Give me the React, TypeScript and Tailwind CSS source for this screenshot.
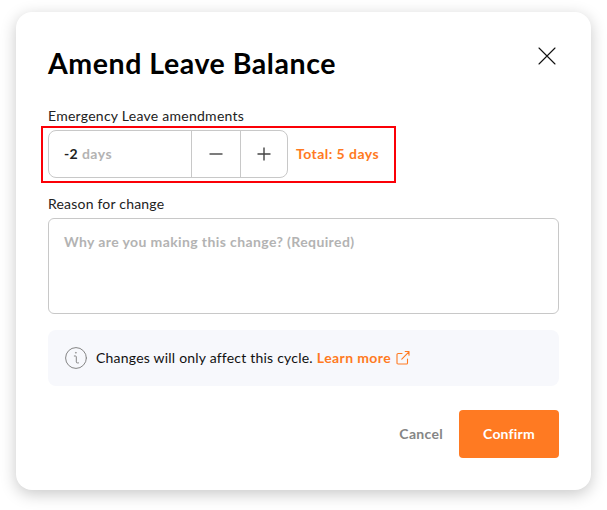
import type { ReactNode } from "react";

function CloseIcon() {
  return (
    <svg className="h-6 w-6" viewBox="0 0 24 24" fill="none" stroke="#111" strokeWidth="1.1" strokeLinecap="round">
      <path d="M4 4l16 16M20 4L4 20" />
    </svg>
  );
}

function InfoIcon() {
  return (
    <svg className="h-6 w-6" viewBox="0 0 24 24" fill="none" stroke="#858585" strokeWidth="1" strokeLinecap="round" strokeLinejoin="round">
      <circle cx="12" cy="12" r="10.4" />
      <path d="M10.3 10h1.2a.8.8 0 0 1 .8.8v5.1a1 1 0 0 0 1 1h1.2" />
      <circle cx="11.8" cy="6.8" r=".4" fill="#858585" strokeWidth=".6" />
    </svg>
  );
}

function ExternalIcon() {
  return (
    <svg className="h-4 w-4" viewBox="0 0 16 16" fill="none" stroke="#ff7a22" strokeWidth="1.1" strokeLinecap="round" strokeLinejoin="round">
      <path d="M7 3.5H3.1A1.1 1.1 0 0 0 2 4.6v8.3A1.1 1.1 0 0 0 3.1 14h8.3a1.1 1.1 0 0 0 1.1-1.1V9" />
      <path d="M6.8 9.2l7.1-7.4M10.2 1.5h3.8v3.8" />
    </svg>
  );
}

function StepButton({ label, className, children }: { label: string; className: string; children: ReactNode }) {
  return (
    <button aria-label={label} className={`flex items-center justify-center border-l border-[#c8c8c8] ${className}`}>
      <svg className="h-4 w-4" viewBox="0 0 16 16" fill="none" stroke="#444" strokeWidth="1.4">
        {children}
      </svg>
    </button>
  );
}

export default function App() {
  return (
    <main className="h-[510px] w-[607px] overflow-hidden bg-white px-4 pt-3 font-['Lato',sans-serif] text-sm leading-5 text-[#222]">
      <section className="h-[478px] w-[575px] rounded-2xl bg-white px-8 pt-8 shadow-[0_4px_16px_rgba(0,0,0,0.22)]">
        <header className="flex h-[38px] items-start justify-between">
          <h1 className="text-[28.5px] leading-[38px] font-bold tracking-[0.55px] whitespace-nowrap text-black">
            Amend Leave Balance
          </h1>
          <button aria-label="Close">
            <CloseIcon />
          </button>
        </header>

        <div className="mt-6 h-6 tracking-[0.26px]">Emergency Leave amendments</div>
        <div className="relative flex h-12 items-center">
          <div className="flex h-12 w-60 rounded-lg border border-[#c8c8c8]">
            <div className="flex flex-1 items-center gap-1 pl-[15px] font-bold tracking-[0.3px]">
              <span>-2</span>
              <span className="tracking-[0.45px] text-[#b3b3b3]">days</span>
            </div>
            <StepButton label="Decrease" className="w-[49px]">
              <path d="M1.5 8h13" />
            </StepButton>
            <StepButton label="Increase" className="w-[47px]">
              <path d="M1.5 8h13M8 1.5v13" />
            </StepButton>
          </div>
          <span className="ml-2 font-bold tracking-[0.45px] text-[#ff7a22]">Total: 5 days</span>
          {/* highlight around the stepper */}
          <div className="absolute -top-1 -left-[7px] h-[57px] w-[355px] border-2 border-[#fb0007]" />
        </div>

        <div className="mt-4 h-6 tracking-[0.2px]">Reason for change</div>
        <textarea
          className="block h-24 w-full resize-none rounded-md border border-[#c8c8c8] px-[15px] py-[13px] font-bold tracking-[0.39px] placeholder:text-[#b3b3b3]"
          placeholder="Why are you making this change? (Required)"
        />

        <div className="mt-4 flex h-14 items-center rounded-lg bg-[#f7f8fc] pl-4">
          <InfoIcon />
          <span className="ml-2 tracking-[0.21px] text-[#111]">Changes will only affect this cycle.</span>
          <a className="ml-1 flex items-center gap-1 font-bold tracking-[0.4px] text-[#ff7a22]">
            Learn more
            <ExternalIcon />
          </a>
        </div>

        <footer className="mt-6 flex items-center justify-end gap-4">
          <button className="font-bold tracking-[0.3px] text-[#858585]">Cancel</button>
          <button className="h-12 w-[100px] rounded bg-[#ff7a22] font-bold tracking-[0.2px] text-white">Confirm</button>
        </footer>
      </section>
    </main>
  );
}
